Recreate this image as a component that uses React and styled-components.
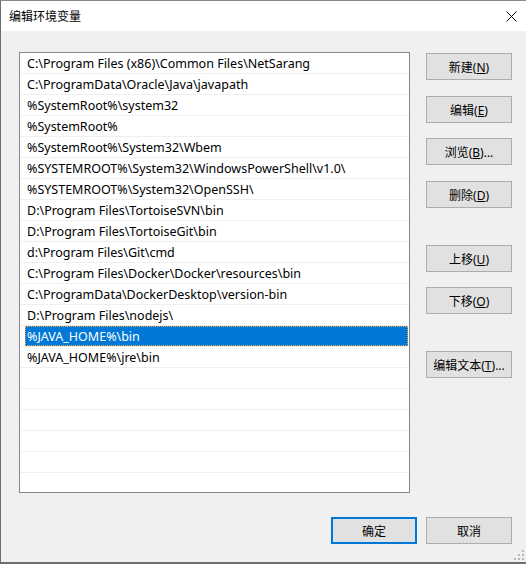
import React from "react";
import styled, { createGlobalStyle } from "styled-components";

const GlobalStyle = createGlobalStyle`
  html, body {
    margin: 0;
    padding: 0;
    width: 526px;
    height: 564px;
    overflow: hidden;
    background: #ffffff;
  }
  * { box-sizing: border-box; }
`;

const UI_FONT = `"Noto Sans", "Noto Sans CJK SC", sans-serif`;

const Window = styled.div`
  position: relative;
  width: 526px;
  height: 564px;
  display: flex;
  flex-direction: column;
  border-top: 1px solid #8a8a8a;
  border-left: 1px solid #6e6e6e;
  border-bottom: 2px solid #6e6e6e;
  font-family: ${UI_FONT};
  font-size: 12px;
  color: #000;
`;

const TitleBar = styled.div`
  height: 30px;
  flex: none;
  display: flex;
  align-items: center;
  justify-content: space-between;
  padding: 0 9px 0 8px;
  background: #ffffff;
`;

const Title = styled.span`
  font-family: "Noto Sans CJK SC", sans-serif;
  font-size: 12px;
  line-height: 1;
  margin-top: -1px;
`;

const Body = styled.div`
  flex: 1;
  display: flex;
  flex-direction: column;
  background: #f0f0f0;
  padding: 21px 14px 0 18px;
`;

const Main = styled.div`
  display: flex;
  gap: 16px;
`;

const ListBox = styled.div`
  width: 391px;
  height: 441px;
  border: 1px solid #828790;
  background: #ffffff;
  overflow: hidden;
`;

const Row = styled.div`
  height: 21px;
  display: flex;
  padding-left: 5px;
  padding-right: 1px;
  border-bottom: 1px solid #efefef;
`;

const Cell = styled.div`
  flex: 1;
  height: 20px;
  display: flex;
  align-items: center;
  padding: 1px 0 0 2px;
  font-size: 12.5px;
  white-space: nowrap;
  background: ${(p) => (p.$selected ? "#0078d7" : "transparent")};
  color: ${(p) => (p.$selected ? "#ffffff" : "#000000")};
  outline: ${(p) => (p.$selected ? "1px dotted #f0a040" : "none")};
  outline-offset: -1px;
`;

const ButtonColumn = styled.div`
  width: 86px;
  display: flex;
  flex-direction: column;
`;

const Button = styled.button`
  width: 86px;
  height: 27px;
  margin: 0;
  margin-top: ${(p) => p.$gap || 0}px;
  padding: 0;
  font-family: ${UI_FONT};
  font-size: 12px;
  color: #000;
  background: #e1e1e1;
  border: ${(p) => (p.$default ? "2px solid #0078d7" : "1px solid #adadad")};
  display: flex;
  align-items: center;
  justify-content: center;
  cursor: default;
`;

const Footer = styled.div`
  display: flex;
  justify-content: flex-end;
  gap: 9px;
  margin-top: 24px;
`;

const Grip = styled.svg`
  position: absolute;
  right: 2px;
  bottom: 2px;
`;

const paths = [
  "C:\\Program Files (x86)\\Common Files\\NetSarang",
  "C:\\ProgramData\\Oracle\\Java\\javapath",
  "%SystemRoot%\\system32",
  "%SystemRoot%",
  "%SystemRoot%\\System32\\Wbem",
  "%SYSTEMROOT%\\System32\\WindowsPowerShell\\v1.0\\",
  "%SYSTEMROOT%\\System32\\OpenSSH\\",
  "D:\\Program Files\\TortoiseSVN\\bin",
  "D:\\Program Files\\TortoiseGit\\bin",
  "d:\\Program Files\\Git\\cmd",
  "C:\\Program Files\\Docker\\Docker\\resources\\bin",
  "C:\\ProgramData\\DockerDesktop\\version-bin",
  "D:\\Program Files\\nodejs\\",
  "%JAVA_HOME%\\bin",
  "%JAVA_HOME%\\jre\\bin",
];

const rows = [...paths, ...Array(6).fill("")];
const selectedIndex = 13;

function CloseIcon() {
  return (
    <svg width="11" height="11" viewBox="0 0 11 11">
      <path d="M0.5 0.5 L10.5 10.5 M10.5 0.5 L0.5 10.5" stroke="#000" strokeWidth="1" />
    </svg>
  );
}

function Label({ text, hotkey, tail = "" }) {
  return (
    <span>
      {text}(<u>{hotkey}</u>){tail}
    </span>
  );
}

export default function App() {
  return (
    <>
      <GlobalStyle />
      <Window>
        <TitleBar>
          <Title>编辑环境变量</Title>
          <CloseIcon />
        </TitleBar>
        <Body>
          <Main>
            <ListBox>
              {rows.map((p, i) => (
                <Row key={i}>
                  <Cell $selected={i === selectedIndex}>{p}</Cell>
                </Row>
              ))}
            </ListBox>
            <ButtonColumn>
              <Button $gap={1}><Label text="新建" hotkey="N" /></Button>
              <Button $gap={16}><Label text="编辑" hotkey="E" /></Button>
              <Button $gap={15}><Label text="浏览" hotkey="B" tail="..." /></Button>
              <Button $gap={16}><Label text="删除" hotkey="D" /></Button>
              <Button $gap={37}><Label text="上移" hotkey="U" /></Button>
              <Button $gap={15}><Label text="下移" hotkey="O" /></Button>
              <Button $gap={37}><Label text="编辑文本" hotkey="T" tail="..." /></Button>
            </ButtonColumn>
          </Main>
          <Footer>
            <Button $default>确定</Button>
            <Button>取消</Button>
          </Footer>
        </Body>
        <Grip width="10" height="10" viewBox="0 0 10 10">
          <g fill="#b8b8b8">
            <rect x="8" y="0" width="2" height="2" />
            <rect x="4" y="4" width="2" height="2" />
            <rect x="8" y="4" width="2" height="2" />
            <rect x="0" y="8" width="2" height="2" />
            <rect x="4" y="8" width="2" height="2" />
            <rect x="8" y="8" width="2" height="2" />
          </g>
        </Grip>
      </Window>
    </>
  );
}
